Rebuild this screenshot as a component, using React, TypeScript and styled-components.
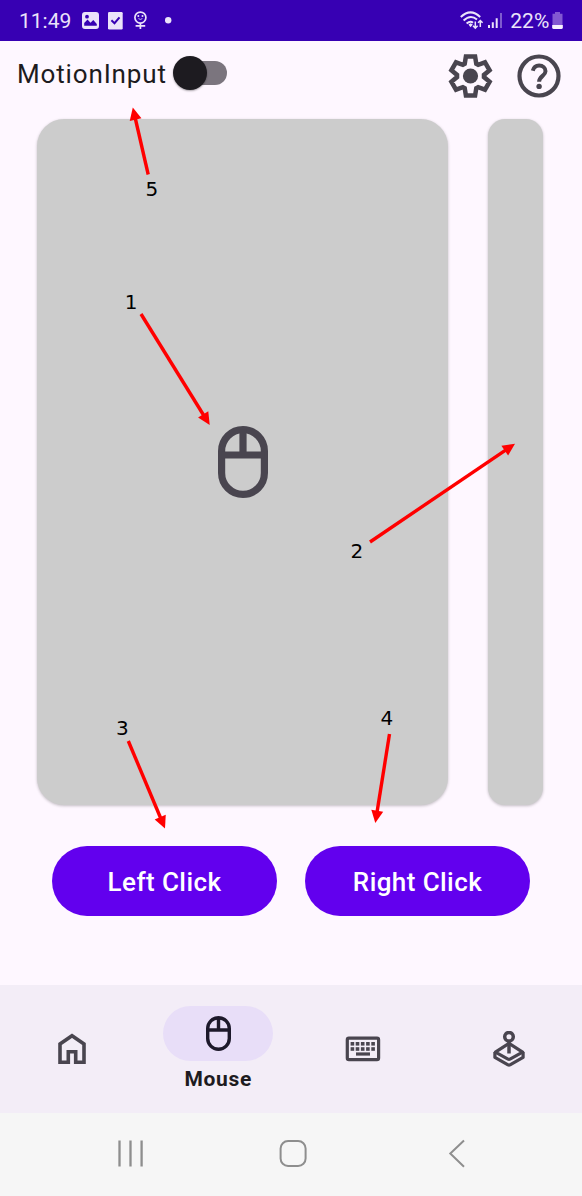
import React from "react";
import styled, { createGlobalStyle } from "styled-components";

const GlobalStyle = createGlobalStyle`
  * { box-sizing: border-box; }
  body { margin: 0; background: #fef7ff; }
  svg { display: block; flex: none; }
`;

const Screen = styled.div`
  position: relative;
  width: 582px;
  height: 1196px;
  display: flex;
  flex-direction: column;
  overflow: hidden;
  background: #fef7ff;
  font-family: Roboto, "Liberation Sans", sans-serif;
`;

const StatusBar = styled.header`
  height: 41px;
  flex: none;
  display: flex;
  justify-content: space-between;
  align-items: flex-start;
  padding: 0 18px 0 19px;
  background: #3700b3;
  color: #ebe3fa;
  font-size: 21px;
  line-height: 42px;
`;

const StatusGroup = styled.div`
  display: flex;
  align-items: flex-start;
`;

const StatusText = styled.span<{ $width: number }>`
  width: ${(p) => p.$width}px;
  white-space: nowrap;
`;

const AppBar = styled.div`
  height: 78px;
  flex: none;
  display: flex;
  justify-content: space-between;
  padding: 12px 20px 0 17px;
`;

const MotionToggle = styled.label`
  height: 42px;
  display: flex;
  align-items: center;
  color: #1d1b20;
  font-size: 26px;
  letter-spacing: 0.85px;
`;

const ToggleText = styled.span`
  width: 156px;
  margin-top: -1px;
  line-height: 40px;
`;

const Track = styled.span`
  width: 54px;
  height: 24px;
  margin-top: -3px;
  display: flex;
  align-items: center;
  border-radius: 12px;
  background: linear-gradient(90deg, transparent 14px, #7b757e 14px);
`;

const Thumb = styled.span`
  width: 34px;
  height: 34px;
  border-radius: 50%;
  background: #1d1b20;
  box-shadow: 0 1px 2px rgba(0, 0, 0, 0.35);
`;

const Actions = styled.div`
  display: flex;
  gap: 23.5px;
`;

const Pads = styled.main`
  display: flex;
  justify-content: space-between;
  height: 686px;
  flex: none;
  padding: 0 39px 0 37px;
`;

const Pad = styled.section<{ $width: number; $radius: number }>`
  width: ${(p) => p.$width}px;
  display: flex;
  align-items: center;
  justify-content: center;
  border-radius: ${(p) => p.$radius}px;
  background: #ccc;
  box-shadow: 0 1px 3px rgba(0, 0, 0, 0.24);
`;

const Clicks = styled.div`
  display: flex;
  justify-content: space-between;
  margin: 41px 52px 0;
`;

const ClickButton = styled.button`
  width: 225px;
  height: 69.5px;
  padding: 3px 0 0;
  border: 0;
  border-radius: 35px;
  background: #6200ee;
  color: #fff;
  font: 500 26px/40px Roboto, "Liberation Sans", sans-serif;
  letter-spacing: 0.42px;
`;

const NavBar = styled.nav`
  height: 128px;
  flex: none;
  margin-top: auto;
  display: grid;
  grid-template-columns: repeat(4, 1fr);
  background: #f3edf7;
`;

const NavItem = styled.div<{ $active?: boolean }>`
  display: flex;
  flex-direction: column;
  align-items: center;
  justify-content: ${(p) => (p.$active ? "flex-start" : "center")};
  padding: ${(p) => (p.$active ? "21px 0 0" : "0 1px 0 0")};
  color: #1d1b20;
  font-size: 21px;
  font-weight: 700;
  line-height: 36px;
  letter-spacing: 0.7px;
`;

const Pill = styled.div`
  width: 110px;
  height: 55px;
  display: flex;
  align-items: center;
  justify-content: center;
  border-radius: 28px;
  background: #e8def8;
`;

const SystemBar = styled.footer`
  height: 83px;
  flex: none;
  display: grid;
  grid-template-columns: 162px 170px 18px;
  padding: 25px 116px 0;
  background: #f6f6f6;
`;

const Annotations = styled.svg`
  position: absolute;
  inset: 0;
  pointer-events: none;
  font-family: "DejaVu Sans", sans-serif;
  font-size: 20px;
`;

const rotate = (x: number, y: number, deg: number) => {
  const a = (deg * Math.PI) / 180;
  return `${(x * Math.cos(a) - y * Math.sin(a)).toFixed(2)},${(x * Math.sin(a) + y * Math.cos(a)).toFixed(2)}`;
};

const gearPoints = [0, 60, 120, 180, 240, 300]
  .map((d) =>
    [[-5.8, -12.2], [-4.6, -19.4], [4.6, -19.4], [5.8, -12.2]]
      .map(([x, y]) => rotate(x, y, d))
      .join(" ")
  )
  .join(" ");

const GearIcon = () => (
  <svg width="45" height="46" viewBox="-22.5 -23 45 46">
    <polygon points={gearPoints} fill="none" stroke="#49454f" strokeWidth="4.5" />
    <circle r="7.6" fill="#49454f" />
  </svg>
);

const HelpIcon = () => (
  <svg width="46" height="46" viewBox="-23 -23 46 46" fill="none" stroke="#49454f" strokeWidth="4.2">
    <circle r="19.5" />
    <path d="M-6.2 -5.2C-5.4 -8.5 -3.2 -10.5 0.1 -10.5C3.9 -10.5 6.5 -8 6.5 -4.8C6.5 -0.3 0.1 0.2 0.1 5.8" strokeWidth="4" />
    <circle cx="0.1" cy="10.4" r="2.7" fill="#49454f" stroke="none" />
  </svg>
);

const MouseIcon = ({ w, h, s, bar, color }: { w: number; h: number; s: number; bar: number; color: string }) => (
  <svg width={w} height={h} viewBox={`0 0 ${w} ${h}`} fill="none" stroke={color} strokeWidth={s}>
    <rect x={s / 2} y={s / 2} width={w - s} height={h - s} rx={(w - s) / 2} />
    <path d={`M${s / 2} ${bar}H${w - s / 2}M${w / 2} ${s / 2}V${bar}`} />
  </svg>
);

const StatusIcons = () => (
  <svg width="96" height="41" viewBox="78 0 96 41" fill="#ebe3fa">
    <path
      fillRule="evenodd"
      d="M85 12H96Q99 12 99 15V26Q99 29 96 29H85Q82 29 82 26V15Q82 12 85 12ZM84.2 25.8H96.8V24L93.3 20L90.5 22.7L87.5 19.4L84.2 23ZM87 14.8A1.9 1.9 0 1 0 87 18.6A1.9 1.9 0 1 0 87 14.8Z"
    />
    <rect x="108" y="12" width="14.7" height="17.4" rx="1.2" />
    <path d="M111.4 20.2L114.5 23.2L119.5 17.4" fill="none" stroke="#3700b3" strokeWidth="2" />
    <g fill="none" stroke="#ebe3fa" strokeWidth="1.7">
      <circle cx="140.4" cy="17.6" r="5.5" />
      <path d="M140.4 23V29M135.6 25.9H145.2" />
      <path d="M138.4 18.6Q140.4 20.2 142.4 18.6" strokeWidth="0.8" />
    </g>
    <circle cx="138.3" cy="16" r="1" />
    <circle cx="142.5" cy="16" r="1" />
    <circle cx="168.2" cy="20.3" r="3.2" />
  </svg>
);

const SignalIcons = () => (
  <svg width="46" height="41" viewBox="460 0 46 41" fill="none" stroke="#ebe3fa" strokeWidth="2">
    <path d="M460.8 17Q470.5 7.8 480.2 17M463.6 20.5Q470.5 14 477 19.5M466.6 23.5Q470.3 20.3 473 22.8" />
    <path d="M468.5 24.6L470.5 23.3L472.8 24.6L470.5 27.3Z" fill="#ebe3fa" stroke="none" />
    <path d="M475.3 21.5V28M473 25.8L475.3 28.1L477.6 25.8M480.3 27V20.5M478 22.8L480.3 20.5L482.6 22.8" strokeWidth="1.5" />
    <path d="M489 25V28M492.8 22.3V28M496.7 18.3V28" strokeWidth="2" />
    <path d="M501 13V28" strokeWidth="2" opacity=".4" />
  </svg>
);

const BatteryIcon = () => (
  <svg width="13" height="41" viewBox="551 0 13 41">
    <path d="M555 12H560V13.8H562.5V28H552.5V13.8H555Z" fill="#8258d2" />
    <path d="M552.2 25H562.8V27.5Q562.8 29 561.3 29H553.7Q552.2 29 552.2 27.5Z" fill="#f7f2ff" />
  </svg>
);

const HomeIcon = () => (
  <svg width="28" height="32" viewBox="0 0 28 32" fill="none" stroke="#49454f" strokeWidth="3.6">
    <path d="M2 29.2V11L14 2.7L26 11V29.2H17.7V18.8H10.3V29.2Z" />
  </svg>
);

const KeyboardIcon = () => (
  <svg width="36" height="26" viewBox="0 0 36 26" fill="#49454f">
    <rect x="2.3" y="2.2" width="31.3" height="21.4" rx="1.6" fill="none" stroke="#49454f" strokeWidth="3.2" />
    {[7.4, 12.5, 17.7, 22.9, 28.1].map((x) => (
      <g key={x}>
        <rect x={x - 1.8} y="6" width="3.6" height="3.6" />
        <rect x={x - 1.8} y="11.2" width="3.6" height="3.6" />
      </g>
    ))}
    <rect x="11" y="16.4" width="14" height="3.2" />
  </svg>
);

const JoystickIcon = () => (
  <svg width="32" height="37" viewBox="0 0 32 37" fill="none" stroke="#49454f" strokeWidth="3.5">
    <circle cx="16" cy="5.8" r="4.3" />
    <path d="M16 10.5V22.5" />
    <path d="M16.4 12.7L29.6 21.2L17 28.1Q16 28.6 15 28.1L2.4 21.2L15.6 12.7" strokeLinejoin="round" strokeWidth="3.2" />
    <path d="M1.9 21V26.4L15 33.9Q16 34.4 17 33.9L30.1 26.4V21" strokeLinejoin="round" strokeWidth="3.2" />
  </svg>
);

const callouts = [
  { n: 1, tx: 124.8, ty: 308.8, from: [141, 314], to: [209.7, 425] },
  { n: 2, tx: 350.5, ty: 557.5, from: [370, 542], to: [515, 443.7] },
  { n: 3, tx: 116, ty: 734.8, from: [128.3, 741], to: [165, 828.5] },
  { n: 4, tx: 380.4, ty: 725, from: [389.5, 734], to: [375.3, 823] },
  { n: 5, tx: 145.5, ty: 196.3, from: [148.2, 174.5], to: [132.8, 107.5] },
];

export default function App() {
  return (
    <>
      <GlobalStyle />
      <Screen>
        <StatusBar>
          <StatusGroup>
            <StatusText $width={59}>11:49</StatusText>
            <StatusIcons />
          </StatusGroup>
          <StatusGroup>
            <SignalIcons />
            <StatusText $width={45}>&thinsp;22%</StatusText>
            <BatteryIcon />
          </StatusGroup>
        </StatusBar>
        <AppBar>
          <MotionToggle>
            <ToggleText>MotionInput</ToggleText>
            <Track>
              <Thumb />
            </Track>
          </MotionToggle>
          <Actions>
            <GearIcon />
            <HelpIcon />
          </Actions>
        </AppBar>
        <Pads>
          <Pad $width={411} $radius={27}>
            <MouseIcon w={50} h={72} s={7.2} bar={29} color="#49454f" />
          </Pad>
          <Pad $width={55} $radius={17} />
        </Pads>
        <Clicks>
          <ClickButton>Left Click</ClickButton>
          <ClickButton>Right Click</ClickButton>
        </Clicks>
        <NavBar>
          <NavItem>
            <HomeIcon />
          </NavItem>
          <NavItem $active>
            <Pill>
              <MouseIcon w={25} h={35} s={3.4} bar={14} color="#1d192b" />
            </Pill>
            Mouse
          </NavItem>
          <NavItem>
            <KeyboardIcon />
          </NavItem>
          <NavItem>
            <JoystickIcon />
          </NavItem>
        </NavBar>
        <SystemBar>
          <svg width="30" height="30" viewBox="116 1138 30 30" stroke="#8e8e8e" strokeWidth="2.3">
            <path d="M119.5 1140.5V1166.5M130.5 1140.5V1166.5M141.6 1140.5V1166.5" />
          </svg>
          <svg width="30" height="30" viewBox="278 1138 30 30" fill="none" stroke="#8e8e8e" strokeWidth="2">
            <rect x="280.6" y="1141" width="25" height="25" rx="7.5" />
          </svg>
          <svg width="18" height="30" viewBox="448 1138 18 30" fill="none" stroke="#8e8e8e" strokeWidth="2">
            <path d="M464 1140.5L450.3 1153.5L464 1166.7" />
          </svg>
        </SystemBar>
        <Annotations width="582" height="1196" viewBox="0 0 582 1196">
          {callouts.map(({ n, tx, ty, from, to }) => {
            const dx = to[0] - from[0];
            const dy = to[1] - from[1];
            const len = Math.hypot(dx, dy);
            const angle = (Math.atan2(dy, dx) * 180) / Math.PI;
            return (
              <g key={n}>
                <text x={tx} y={ty}>{n}</text>
                <g transform={`translate(${from[0]} ${from[1]}) rotate(${angle})`} fill="#f00">
                  <rect x="0" y="-1.7" width={len - 10} height="3.4" />
                  <path d={`M${len} 0L${len - 12.4} -6V6Z`} />
                </g>
              </g>
            );
          })}
        </Annotations>
      </Screen>
    </>
  );
}
